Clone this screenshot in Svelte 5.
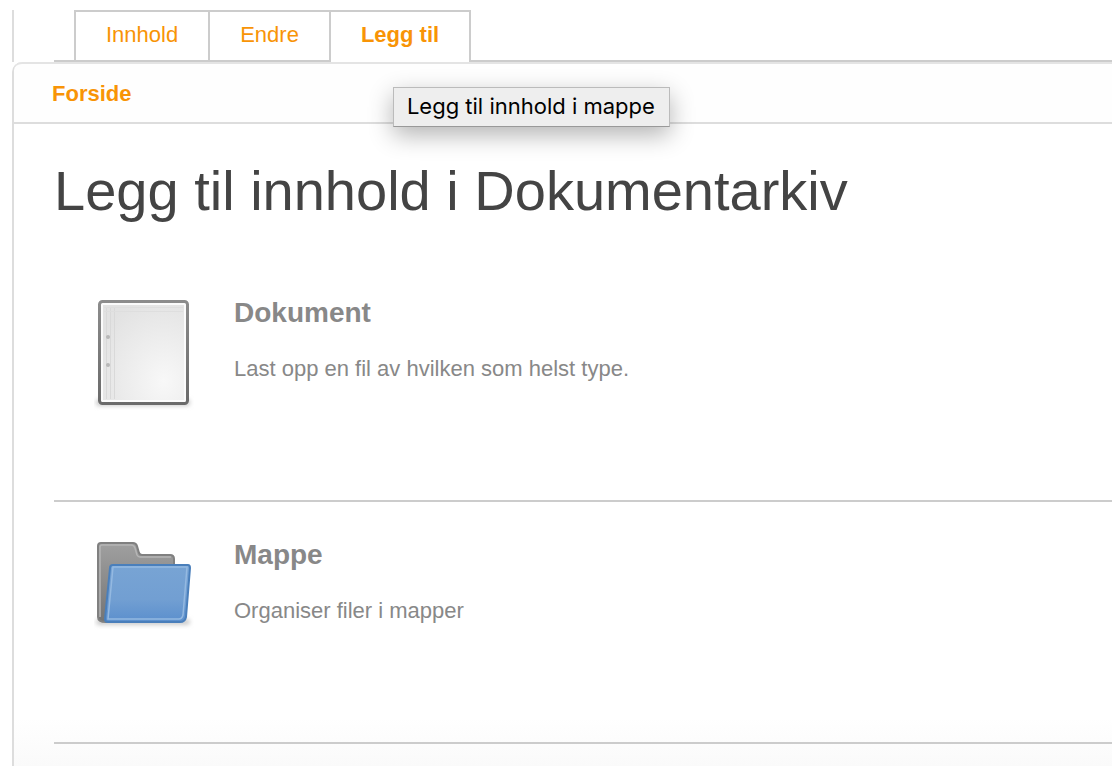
<script lang="ts">
	interface Tab {
		label: string;
		href: string;
		active?: boolean;
		hint?: string;
	}

	const tabs: Tab[] = [
		{ label: 'Innhold', href: '#innhold' },
		{ label: 'Endre', href: '#endre' },
		{ label: 'Legg til', href: '#legg-til', active: true, hint: 'Legg til innhold i mappe' }
	];

	const types = [
		{ id: 'dokument', title: 'Dokument', text: 'Last opp en fil av hvilken som helst type.' },
		{ id: 'mappe', title: 'Mappe', text: 'Organiser filer i mapper' }
	];
</script>

<div class="page">
	<nav class="top">
		<ul class="tabs">
			{#each tabs as tab}
				<li class:active={tab.active}>
					<a href={tab.href} aria-describedby={tab.hint ? 'hint' : undefined}>{tab.label}</a>
					{#if tab.hint}
						<span class="tooltip" role="tooltip" id="hint">{tab.hint}</span>
					{/if}
				</li>
			{/each}
		</ul>
	</nav>

	<div class="panel">
		<div class="breadcrumb">
			<a href="#forside">Forside</a>
		</div>

		<main>
			<h1>Legg til innhold i Dokumentarkiv</h1>

			<ul class="types">
				{#each types as type}
					<li>
						{#if type.id === 'dokument'}
							<svg class="icon" viewBox="0 3 100 120" aria-hidden="true">
								<defs>
									<linearGradient id="edge" x1="0" y1="0" x2="0" y2="1">
										<stop offset="0" stop-color="#8c8c8c" />
										<stop offset="1" stop-color="#6a6a6a" />
									</linearGradient>
									<radialGradient id="paper" cx="0.75" cy="0.8" r="0.9">
										<stop offset="0" stop-color="#f8f8f8" />
										<stop offset="1" stop-color="#e2e2e2" />
									</radialGradient>
									<filter id="soft" x="-20%" y="-100%" width="140%" height="300%">
										<feGaussianBlur stdDeviation="2" />
									</filter>
								</defs>
								<rect x="2" y="105" width="94" height="7" rx="3" fill="#ccc" filter="url(#soft)" />
								<rect x="5.5" y="7.5" width="88" height="102" rx="3" fill="#fbfbfb" stroke="url(#edge)" stroke-width="3" />
								<rect x="9" y="11" width="81" height="95" fill="url(#paper)" />
								<path d="M12.5 13v92M16.5 13v92M20.5 13v92" stroke="#d9d9d9" />
								<path d="M10 13.5h79M10 17.5h79" stroke="#dedede" />
								<circle cx="14" cy="43" r="2" fill="#b8b8b8" />
								<circle cx="14" cy="71" r="2" fill="#b8b8b8" />
							</svg>
						{:else}
							<svg class="icon" viewBox="0 2 100 120" aria-hidden="true">
								<defs>
									<linearGradient id="back" x1="0" y1="0" x2="0" y2="1">
										<stop offset="0" stop-color="#a0a0a0" />
										<stop offset="1" stop-color="#747474" />
									</linearGradient>
									<linearGradient id="front" x1="0" y1="0" x2="0" y2="1">
										<stop offset="0" stop-color="#78a4d4" />
										<stop offset="0.6" stop-color="#729fd2" />
										<stop offset="1" stop-color="#5b8fcd" />
									</linearGradient>
									<filter id="shade" x="-20%" y="-100%" width="140%" height="300%">
										<feGaussianBlur stdDeviation="2" />
									</filter>
								</defs>
								<rect x="2" y="82" width="94" height="6" rx="3" fill="#ccc" filter="url(#shade)" />
								<path d="M4 9q0-3 3-3h32q3 0 4 3l2 7q1 2 3 2h28q4 0 4 4v56l-68 7q-8 0-8-5z" fill="url(#back)" stroke="#808080" stroke-width="2" />
								<path d="M6 80V10q0-2 2-2h29q3 0 4 3l2 7q1 2 3 2h31" fill="none" stroke="#b5b5b5" stroke-width="1.5" />
								<path d="M19 28h75q2 0 2 3l-4 49q-1 5-6 5H14q-3 0-3-3l5-51q0-3 3-3z" fill="url(#front)" stroke="#4a7fbb" stroke-width="2" />
								<path d="M19 30h74l-4 48q-1 4-4 4H14z" fill="none" stroke="#94b9e1" stroke-width="1.5" />
							</svg>
						{/if}
						<div>
							<h2>{type.title}</h2>
							<p>{type.text}</p>
						</div>
					</li>
				{/each}
			</ul>
		</main>
	</div>
</div>

<style>
	:global(body) {
		background: #fff;
	}

	.page {
		min-height: 100vh;
		box-sizing: border-box;
		padding: 10px 0 0 12px;
		display: flex;
		flex-direction: column;
		font-family: 'Liberation Sans', Arial, sans-serif;
		font-size: 22px;
		line-height: 24px;
		color: #888;
	}

	ul,
	h1,
	h2,
	p {
		margin: 0;
		padding: 0;
		list-style: none;
	}

	a {
		color: #f89406;
		text-decoration: none;
	}

	.top {
		border-left: 2px solid #ddd;
		padding-left: 40px;
	}

	.tabs {
		display: flex;
		padding-left: 20px;
		border-bottom: 2px solid #ccc;
	}

	.tabs li {
		position: relative;
		border: 2px solid #ccc;
		border-width: 2px 0 0 2px;
	}

	.tabs li:last-child {
		border-right-width: 2px;
	}

	.tabs a {
		display: block;
		padding: 11px 30px 13px;
	}

	.tabs .active {
		margin-bottom: -2px;
		background: #fff;
		font-weight: bold;
	}

	.tooltip {
		position: absolute;
		top: 75px;
		left: 62px;
		z-index: 1;
		padding: 6px 14px 8px 13px;
		background: #eee;
		border: 1px solid #bbb;
		border-bottom-color: #999;
		box-shadow: 0 8px 24px rgba(0, 0, 0, 0.3);
		color: #000;
		font-family: Inter, sans-serif;
		font-weight: normal;
		white-space: nowrap;
	}

	.panel {
		flex: 1;
		border-left: 2px solid #ddd;
		border-top-left-radius: 10px;
		background: linear-gradient(to top, #fafafa, #fff 48px);
	}

	.breadcrumb {
		padding: 19px 38px 17px;
		border-top: 2px solid #e4e4e4;
		border-bottom: 2px solid #ddd;
		border-top-left-radius: 8px;
		background: #fefefe;
		font-weight: bold;
		line-height: 22px;
	}

	main {
		padding: 35px 0 0 40px;
	}

	h1 {
		margin-bottom: 37px;
		color: #444;
		font-size: 56px;
		font-weight: normal;
		line-height: 64px;
	}

	.types li {
		display: flex;
		align-items: flex-start;
		gap: 40px;
		padding: 37px 0 119px 40px;
		border-bottom: 2px solid #ccc;
	}

	.icon {
		flex: none;
		width: 100px;
		height: 120px;
		margin-bottom: -36px;
	}

	h2 {
		margin-bottom: 28px;
		font-size: 28px;
		line-height: 32px;
	}
</style>
